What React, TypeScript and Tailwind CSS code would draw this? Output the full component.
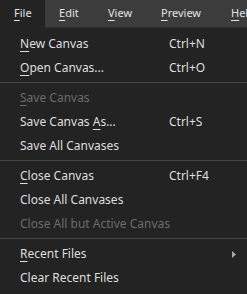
import React from 'react'

type Item = {
  label: string
  mn?: number
  shortcut?: string
  disabled?: boolean
  submenu?: boolean
}

const groups: Item[][] = [
  [
    { label: 'New Canvas', mn: 0, shortcut: 'Ctrl+N' },
    { label: 'Open Canvas...', mn: 0, shortcut: 'Ctrl+O' },
  ],
  [
    { label: 'Save Canvas', mn: 0, disabled: true },
    { label: 'Save Canvas As...', mn: 12, shortcut: 'Ctrl+S' },
    { label: 'Save All Canvases' },
  ],
  [
    { label: 'Close Canvas', mn: 0, shortcut: 'Ctrl+F4' },
    { label: 'Close All Canvases' },
    { label: 'Close All but Active Canvas', disabled: true },
  ],
  [
    { label: 'Recent Files', mn: 0, submenu: true },
    { label: 'Clear Recent Files' },
  ],
]

const menus = [
  { label: 'File', w: 'w-[45px]', active: true },
  { label: 'Edit', w: 'w-[49px]' },
  { label: 'View', w: 'w-[53px]' },
  { label: 'Preview', w: 'w-[70px]' },
  { label: 'Help', w: 'w-[50px]' },
]

const Label = ({ text, mn }: { text: string; mn?: number }) => {
  if (mn === undefined) return <>{text}</>
  return (
    <>
      {text.slice(0, mn)}
      <span className="underline underline-offset-[3px] decoration-1">{text[mn]}</span>
      {text.slice(mn + 1)}
    </>
  )
}

const MenuRow = ({ item }: { item: Item }) => (
  <div
    className={
      'flex h-6 items-center pl-5 pr-3 ' +
      (item.disabled ? 'text-[#6b6b6b]' : 'text-[#dedede]')
    }
  >
    <span className="w-[149px] shrink-0 whitespace-nowrap">
      <Label text={item.label} mn={item.mn} />
    </span>
    <span className="flex-1 whitespace-nowrap">{item.shortcut}</span>
    {item.submenu && (
      <svg width="4" height="7" viewBox="0 0 4 7" className="mr-[-1px]">
        <path d="M0 0 L4 3.5 L0 7 Z" fill="#a8a8a8" />
      </svg>
    )}
  </div>
)

export default function App() {
  return (
    <div className="w-[247px] h-[294px] overflow-hidden bg-[#232323] font-['Noto_Sans',sans-serif]">
      <div className="flex h-7 bg-[#3c3c3c] text-[11px] text-[#e2e2e2] shadow-[inset_0_-1px_0_#2e2e2e] whitespace-nowrap">
        {menus.map((m) => (
          <div
            key={m.label}
            className={
              'flex h-full shrink-0 items-center pl-[14px] pb-[1px] ' +
              m.w +
              (m.active ? ' bg-[#232323]' : '')
            }
          >
            <Label text={m.label} mn={0} />
          </div>
        ))}
      </div>
      <div className="pt-1 text-[12px]">
        {groups.map((g, gi) => (
          <div key={gi}>
            {gi > 0 && (
              <div className="h-[6px] pt-[2px]">
                <div className="h-px bg-[#444444]" />
              </div>
            )}
            {g.map((it) => (
              <MenuRow key={it.label} item={it} />
            ))}
          </div>
        ))}
      </div>
    </div>
  )
}
